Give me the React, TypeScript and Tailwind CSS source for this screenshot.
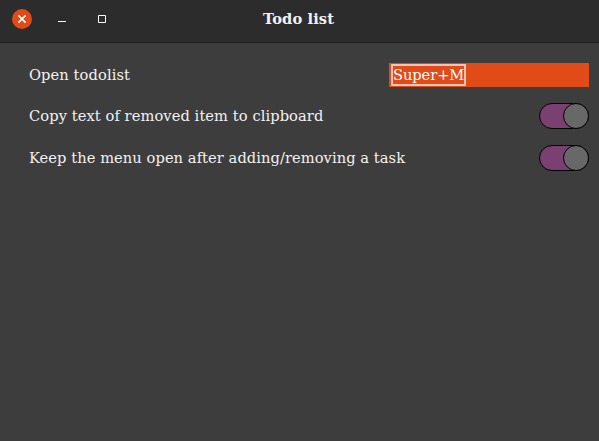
import React from "react";

function Toggle() {
  return (
    <div className="flex h-[26px] w-[50px] justify-end rounded-full border border-black bg-[#7a4072]">
      <div className="-m-px size-[26px] rounded-full border border-black bg-[#686868]" />
    </div>
  );
}

export default function App() {
  return (
    <div className="flex h-[441px] w-[599px] flex-col bg-[#3d3d3d] font-['DejaVu_Serif',serif] text-[14.667px] leading-[18px] text-[#f2f2f2]">
      <header className="grid h-[43px] grid-cols-3 border-b border-[#1f1f1f] bg-[#2c2c2c]">
        <div className="flex h-[38px] items-center pl-3">
          <svg width="100" height="20" viewBox="0 0 100 20" fill="none" stroke="white">
            <circle cx="10" cy="10" r="10" fill="#e04b18" stroke="none" />
            <path d="M6.4 6.4l7.2 7.2M13.6 6.4l-7.2 7.2" strokeWidth="1.6" />
            <path d="M46 12.5h8M86.5 6.5h7v7h-7z" />
          </svg>
        </div>
        <h1 className="flex h-[38px] items-center justify-center pr-0.5 font-bold tracking-[0.09px]">Todo list</h1>
      </header>
      <main className="flex flex-col pt-5 pr-2.5 pl-[29px]">
        <div className="flex h-6 items-center justify-between">
          <span className="tracking-[0.09px]">Open todolist</span>
          <div className="flex h-6 w-[200px] items-center bg-[#e04b18] pl-0.5">
            <span className="flex h-[22px] w-[75px] items-center border-2 border-[#f5c4b4] tracking-[-0.08px] whitespace-nowrap text-white">Super+M</span>
          </div>
        </div>
        <div className="mt-4 flex h-[26px] items-center justify-between">
          <span className="tracking-[0.075px]">Copy text of removed item to clipboard</span>
          <Toggle />
        </div>
        <div className="mt-4 flex h-[26px] items-center justify-between">
          <span className="tracking-[0.06px]">Keep the menu open after adding/removing a task</span>
          <Toggle />
        </div>
      </main>
    </div>
  );
}
